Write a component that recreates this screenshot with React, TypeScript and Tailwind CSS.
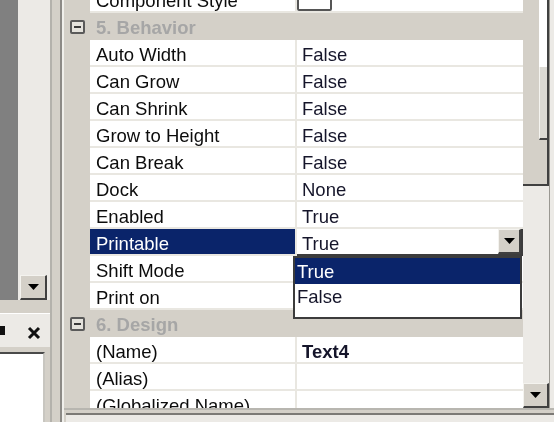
import React from 'react';

type Row =
  | { kind: 'cat'; label: string }
  | { kind: 'prop'; name: string; value?: string; bold?: boolean; swatch?: boolean; selected?: boolean };

const rows: Row[] = [
  { kind: 'prop', name: 'Component Style', swatch: true },
  { kind: 'cat', label: '5. Behavior' },
  { kind: 'prop', name: 'Auto Width', value: 'False' },
  { kind: 'prop', name: 'Can Grow', value: 'False' },
  { kind: 'prop', name: 'Can Shrink', value: 'False' },
  { kind: 'prop', name: 'Grow to Height', value: 'False' },
  { kind: 'prop', name: 'Can Break', value: 'False' },
  { kind: 'prop', name: 'Dock', value: 'None' },
  { kind: 'prop', name: 'Enabled', value: 'True' },
  { kind: 'prop', name: 'Printable', value: 'True', selected: true },
  { kind: 'prop', name: 'Shift Mode' },
  { kind: 'prop', name: 'Print on' },
  { kind: 'cat', label: '6. Design' },
  { kind: 'prop', name: '(Name)', value: 'Text4', bold: true },
  { kind: 'prop', name: '(Alias)' },
  { kind: 'prop', name: '(Globalized Name)' },
];

function DownTriangle() {
  return (
    <svg width="11" height="6" viewBox="0 0 11 6">
      <path d="M0 0 H11 L5.5 6 Z" fill="#000" />
    </svg>
  );
}

function ScrollButton({ className = '' }: { className?: string }) {
  return (
    <div
      className={`flex items-center justify-center border-t border-l border-t-[#f4f3ef] border-l-[#f4f3ef] border-r-2 border-b-2 border-r-[#404040] border-b-[#404040] bg-[#d4d0c8] ${className}`}
    >
      <DownTriangle />
    </div>
  );
}

function MinusBox() {
  return (
    <div className="flex h-[14px] w-[15px] items-center justify-center rounded-[2px] border-2 border-[#5a5a5a] bg-[#e4e2dc]">
      <div className="h-[2px] w-[7px] bg-[#3a3a3a]" />
    </div>
  );
}

function LeftDock() {
  return (
    <div className="flex w-[52px] shrink-0 flex-col border-r-2 border-[#b4b2ac]">
      <div className="flex h-[300px]">
        <div className="w-[18px] bg-[#808080]" />
        <div className="flex w-[32px] flex-col bg-[#eceae6]">
          <div className="flex-1" />
          <ScrollButton className="ml-[2px] h-[25px] w-[27px]" />
        </div>
      </div>
      <div className="h-[13px] bg-[#d4d0c8]" />
      <div className="flex h-[34px] items-center border-t border-white bg-[#eceae6] pt-[4px]">
        <div className="-mt-[5px] h-[9px] w-[5px] bg-[#111]" />
        <svg className="ml-[22px]" width="14" height="14" viewBox="0 0 14 14">
          <path d="M2 2 L12 12 M12 2 L2 12" stroke="#111" strokeWidth="3" />
        </svg>
      </div>
      <div className="h-[5px] bg-[#d4d0c8]" />
      <div className="mr-[5px] flex-1 border-t-2 border-r-2 border-t-[#4a4a4a] border-r-[#c8c6c0] bg-white" />
    </div>
  );
}

function PropRow({ row }: { row: Extract<Row, { kind: 'prop' }> }) {
  return (
    <div className="relative flex h-[27px]">
      <div className="w-[26px] shrink-0 bg-[#d4d0c8]" />
      <div
        className={`flex w-[205px] shrink-0 items-center whitespace-nowrap border-b-2 border-[#e9e7e1] pl-[6px] pt-[5px] ${
          row.selected ? 'bg-[#0a246a] text-white' : 'bg-white text-[#0c0c0c]'
        }`}
      >
        {row.name}
      </div>
      <div className="w-[2px] shrink-0 bg-[#e9e7e1]" />
      {row.selected ? (
        <div className="flex w-[226px] shrink-0 items-center border-r-2 border-b-2 border-[#3c3c3c] bg-white pl-[5px] text-[#15152a]">
          <span className="flex-1 pt-[5px]">{row.value}</span>
          <ScrollButton className="h-[25px] w-[23px]" />
        </div>
      ) : (
        <div
          className={`flex w-[226px] shrink-0 items-center border-b-2 border-[#e9e7e1] bg-white pl-[5px] text-[#15152a] ${
            row.swatch ? '' : 'pt-[5px]'
          } ${row.bold ? 'font-bold' : ''}`}
        >
          {row.swatch ? (
            <div className="-ml-[5px] mt-[3px] h-[22px] w-[35px] rounded-[2px] border-2 border-[#555] bg-white" />
          ) : (
            row.value
          )}
        </div>
      )}
      {row.selected && (
        <div className="absolute left-[229px] top-[27px] z-10 flex h-[63px] w-[229px] flex-col border-2 border-[#3c3c3c] bg-white">
          <div className="flex h-[26px] items-center bg-[#0a246a] pl-[2px] pt-[3px] text-white">True</div>
          <div className="flex h-[25px] items-center pl-[2px] pt-[2px] text-[#15152a]">False</div>
        </div>
      )}
    </div>
  );
}

function CatRow({ label }: { label: string }) {
  return (
    <div className="flex h-[27px] items-center bg-[#d4d0c8]">
      <div className="flex w-[26px] shrink-0 justify-center">
        <MinusBox />
      </div>
      <div className="pl-[6px] pt-[4px] font-bold text-[#a6a6a6]">{label}</div>
    </div>
  );
}

function GridScrollbar() {
  return (
    <div className="flex w-[31px] shrink-0 bg-[#eceae6]">
      <div className="flex w-[26px] flex-col">
        <div className="flex h-[186px] border-b-2 border-r-2 border-[#404040] bg-[#d4d0c8]">
          <div className="w-[16px]" />
          <div className="flex w-[8px] flex-col">
            <div className="h-[67px] bg-white" />
            <div className="h-[73px] border-b-2 border-l border-b-[#404040] border-l-[#f4f3ef] bg-[#dcdad4]" />
          </div>
        </div>
        <div className="flex-1" />
        <ScrollButton className="h-[25px] w-[26px]" />
      </div>
      <div className="w-[1px] bg-[#9a9892]" />
    </div>
  );
}

export default function App() {
  return (
    <div className="flex h-[422px] w-[554px] overflow-hidden bg-[#d4d0c8] text-[18.5px] leading-none blur-[0.6px] [font-family:'Liberation_Sans',Arial,sans-serif]">
      <LeftDock />
      <div className="w-[8px] shrink-0 bg-[#d4d0c8]" />
      <div className="w-[2px] shrink-0 bg-[#8c8a86]" />
      <div className="w-[2px] shrink-0 bg-[#f0efeb]" />
      <div className="flex w-[490px] shrink-0 flex-col">
        <div className="flex h-[408px]">
          <div className="w-[459px] overflow-hidden">
            <div className="-mt-[14px]">
              {rows.map((row, i) =>
                row.kind === 'cat' ? <CatRow key={i} label={row.label} /> : <PropRow key={i} row={row} />,
              )}
            </div>
          </div>
          <GridScrollbar />
        </div>
        <div className="h-[5px] border-t-2 border-[#b8b6b0] bg-[#d4d0c8]" />
        <div className="ml-[2px] flex-1 border-t-2 border-[#7c7a76] bg-[#eceae6]" />
      </div>
    </div>
  );
}
